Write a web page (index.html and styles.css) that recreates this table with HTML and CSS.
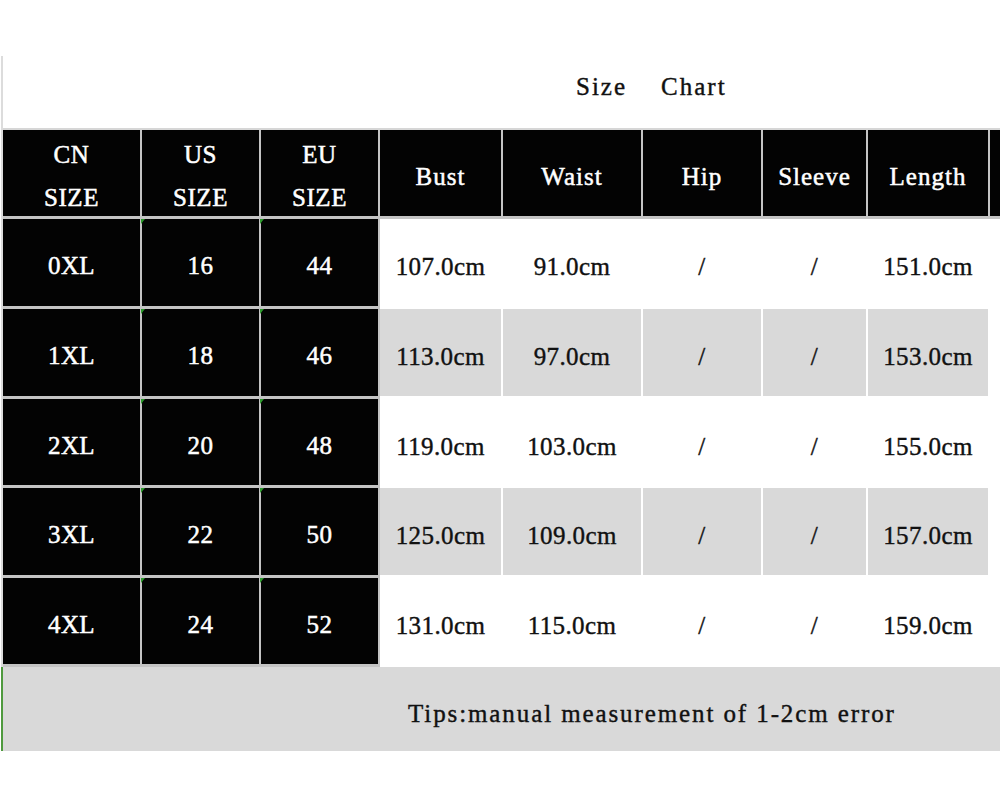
FILE: index.html
```html
<!DOCTYPE html>
<html>
<head>
<meta charset="utf-8">
<link rel="stylesheet" href="styles.css">
</head>
<body>
<div class="sheet">
  <div class="title-row">
    <span class="title">Size</span>
    <span class="title">Chart</span>
  </div>
  <div class="grid">
    <div class="cell head two"><span>CN</span><span>SIZE</span></div>
    <div class="cell head two"><span>US</span><span>SIZE</span></div>
    <div class="cell head two"><span>EU</span><span>SIZE</span></div>
    <div class="cell head">Bust</div>
    <div class="cell head">Waist</div>
    <div class="cell head">Hip</div>
    <div class="cell head">Sleeve</div>
    <div class="cell head">Length</div>
    <div class="cell head last"></div>

    <div class="cell key">0XL</div>
    <div class="cell key mk">16</div>
    <div class="cell key mk">44</div>
    <div class="cell val">107.0cm</div>
    <div class="cell val">91.0cm</div>
    <div class="cell val">/</div>
    <div class="cell val">/</div>
    <div class="cell val">151.0cm</div>
    <div class="cell blank"></div>

    <div class="cell key">1XL</div>
    <div class="cell key mk">18</div>
    <div class="cell key mk">46</div>
    <div class="cell val alt">113.0cm</div>
    <div class="cell val alt">97.0cm</div>
    <div class="cell val alt">/</div>
    <div class="cell val alt">/</div>
    <div class="cell val alt">153.0cm</div>
    <div class="cell blank"></div>

    <div class="cell key">2XL</div>
    <div class="cell key mk">20</div>
    <div class="cell key mk">48</div>
    <div class="cell val">119.0cm</div>
    <div class="cell val">103.0cm</div>
    <div class="cell val">/</div>
    <div class="cell val">/</div>
    <div class="cell val">155.0cm</div>
    <div class="cell blank"></div>

    <div class="cell key">3XL</div>
    <div class="cell key mk">22</div>
    <div class="cell key mk">50</div>
    <div class="cell val alt">125.0cm</div>
    <div class="cell val alt">109.0cm</div>
    <div class="cell val alt">/</div>
    <div class="cell val alt">/</div>
    <div class="cell val alt">157.0cm</div>
    <div class="cell blank"></div>

    <div class="cell key">4XL</div>
    <div class="cell key mk">24</div>
    <div class="cell key mk">52</div>
    <div class="cell val">131.0cm</div>
    <div class="cell val">115.0cm</div>
    <div class="cell val">/</div>
    <div class="cell val">/</div>
    <div class="cell val">159.0cm</div>
    <div class="cell blank"></div>

    <div class="tips">Tips:manual measurement of 1-2cm error</div>
  </div>
</div>
</body>
</html>
```
FILE: styles.css
```css
html, body {
  margin: 0;
  padding: 0;
  background: #ffffff;
  overflow: hidden;
}

body {
  width: 1000px;
  height: 800px;
  font-family: "Liberation Serif", "Noto Sans CJK SC", serif;
  font-size: 25px;
}

.sheet {
  margin-top: 56px;
  margin-left: 1px;
  border-left: 2px solid #dcdcdc;
  width: 997px;
}

.title-row {
  height: 74px;
  border-bottom: 2px solid #d6d6d6;
  box-sizing: border-box;
  display: flex;
  align-items: center;
  padding-left: 573px;
  padding-bottom: 10px;
  gap: 34px;
}

.title {
  color: #111;
  letter-spacing: 2px;
  -webkit-text-stroke: 0.4px #111;
}

.grid {
  display: grid;
  grid-template-columns: 139px 119px 119px 123px 140px 120px 105px 122px 1fr;
  grid-template-rows: 89px 90px 90px 89px 90px 89px 84px;
}

.cell {
  position: relative;
  display: flex;
  flex-direction: column;
  align-items: center;
  justify-content: center;
  border-right: 2px solid #ffffff;
  border-bottom: 3px solid #ffffff;
  box-sizing: border-box;
  white-space: nowrap;
  letter-spacing: 0.4px;
}

.head,
.key {
  background: #030303;
  color: #ffffff;
  border-color: #c4c4c4;
  -webkit-text-stroke: 0.5px #ffffff;
}

.head {
  padding-top: 8px;
  letter-spacing: 1px;
}

.head.two {
  line-height: 43px;
  padding-top: 6px;
  letter-spacing: 0.6px;
}

.head.last {
  border-right: none;
}

.key {
  padding-top: 7px;
}

.val {
  background: #ffffff;
  color: #111111;
  padding-top: 9px;
  -webkit-text-stroke: 0.4px #111111;
}

.val.alt {
  background: #d9d9d9;
}

.blank {
  background: #ffffff;
  border: none;
}

.mk::before {
  content: "";
  position: absolute;
  left: -1px;
  top: 0;
  border-top: 5px solid #2c9b2c;
  border-right: 4px solid transparent;
}

.tips {
  grid-column: 1 / -1;
  background: #d9d9d9;
  color: #111111;
  display: flex;
  align-items: center;
  padding-left: 405px;
  padding-top: 9px;
  letter-spacing: 1.9px;
  margin-left: -2px;
  border-left: 2px solid #4f9a3e;
  -webkit-text-stroke: 0.4px #111111;
}
```
